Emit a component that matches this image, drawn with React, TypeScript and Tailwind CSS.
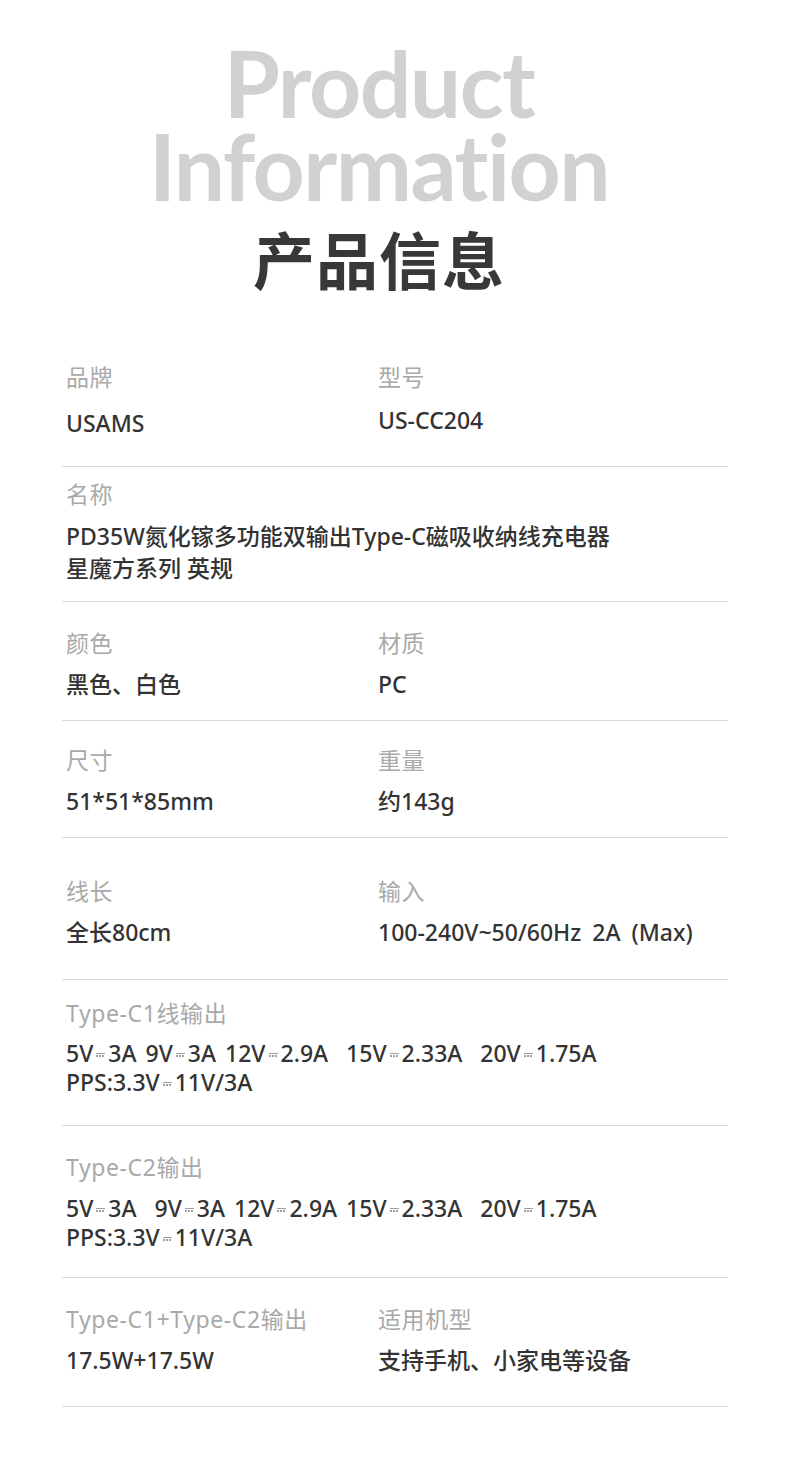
import React from "react";

const DC = () => (
  <span className="inline-flex flex-col justify-center gap-[1px] w-[9px] mx-[3px] align-middle relative -top-[1px]">
    <span className="block h-[1.5px] bg-[#a0a0a0]" />
    <span className="block h-[1.5px] w-full bg-[repeating-linear-gradient(90deg,#a0a0a0_0_2px,transparent_2px_3px)]" />
  </span>
);

const font = { fontFamily: '"Noto Sans", "Noto Sans CJK SC", sans-serif' };

const Label = ({ children }: { children: React.ReactNode }) => (
  <div className="text-[23px] leading-[30px] text-[#a9a9a9] font-normal tracking-[0.6px] whitespace-pre">{children}</div>
);

const Value = ({
  children,
  lh = "leading-[29px]",
  ws = "[word-spacing:5px]",
}: {
  children: React.ReactNode;
  lh?: string;
  ws?: string;
}) => (
  <div className={`text-[23px] ${lh} ${ws} text-[#333333] font-medium mt-[12px] whitespace-pre`}>{children}</div>
);

export default function App() {
  return (
    <div className="w-[790px] h-[1476px] bg-white" style={font}>
      <div className="flex flex-col items-center pr-[32px] pt-[41px]">
        <div
          className="text-[91px] leading-[83px] font-bold text-[#d0d1d3] tracking-[-1.5px] text-center"
          style={{ fontFamily: 'Lato, "Open Sans", sans-serif' }}
        >
          <div>Product</div>
          <div>Information</div>
        </div>
        <div
          className="text-[62px] leading-[80px] font-bold text-[#38383a] mt-[11px] tracking-[1px]"
          style={{ fontFamily: '"Noto Sans CJK SC", sans-serif' }}
        >
          产品信息
        </div>
      </div>

      <div className="mx-[62px] mt-[64px]">
        {/* row 1 */}
        <div className="grid grid-cols-[312px_1fr] pl-[4px] pb-[28px] border-b border-[#d9d9d9]">
          <div>
            <Label>品牌</Label>
            <div className="pt-[5px]"><Value>USAMS</Value></div>
          </div>
          <div>
            <Label>型号</Label>
            <div className="pt-[2px]"><Value>US-CC204</Value></div>
          </div>
        </div>
        {/* row 2 */}
        <div className="pl-[4px] pt-[12px] pb-[17px] border-b border-[#d9d9d9]">
          <Label>名称</Label>
          <div className="mt-[-1px]">
            <Value lh="leading-[32px]" ws="[word-spacing:0px]">
              {"PD35W氮化镓多功能双输出Type-C磁吸收纳线充电器\n星魔方系列 英规"}
            </Value>
          </div>
        </div>
        {/* row 3 */}
        <div className="grid grid-cols-[312px_1fr] pl-[4px] pt-[26px] pb-[21px] border-b border-[#d9d9d9]">
          <div>
            <Label>颜色</Label>
            <Value>黑色、白色</Value>
          </div>
          <div>
            <Label>材质</Label>
            <Value>PC</Value>
          </div>
        </div>
        {/* row 4 */}
        <div className="grid grid-cols-[312px_1fr] pl-[4px] pt-[24px] pb-[21px] border-b border-[#d9d9d9]">
          <div>
            <Label>尺寸</Label>
            <Value>51*51*85mm</Value>
          </div>
          <div>
            <Label>重量</Label>
            <Value>约143g</Value>
          </div>
        </div>
        {/* row 5 */}
        <div className="grid grid-cols-[312px_1fr] pl-[4px] pt-[38px] pb-[32px] border-b border-[#d9d9d9]">
          <div>
            <Label>线长</Label>
            <Value>全长80cm</Value>
          </div>
          <div>
            <Label>输入</Label>
            <Value>100-240V~50/60Hz 2A (Max)</Value>
          </div>
        </div>
        {/* row 6 */}
        <div className="pl-[4px] pt-[18px] pb-[28px] border-b border-[#d9d9d9]">
          <Label>Type-C1线输出</Label>
          <div className="mt-[-1px]">
            <Value ws="[word-spacing:3px]">
              5V<DC />3A 9V<DC />3A 12V<DC />2.9A  15V<DC />2.33A  20V<DC />1.75A{"\n"}PPS:3.3V<DC />11V/3A
            </Value>
          </div>
        </div>
        {/* row 7 */}
        <div className="pl-[4px] pt-[26px] pb-[25px] border-b border-[#d9d9d9]">
          <Label>Type-C2输出</Label>
          <div className="mt-[1px]">
            <Value ws="[word-spacing:3px]">
              5V<DC />3A  9V<DC />3A 12V<DC />2.9A 15V<DC />2.33A  20V<DC />1.75A{"\n"}PPS:3.3V<DC />11V/3A
            </Value>
          </div>
        </div>
        {/* row 8 */}
        <div className="grid grid-cols-[312px_1fr] pl-[4px] pt-[26px] pb-[31px] border-b border-[#d9d9d9]">
          <div>
            <Label>Type-C1+Type-C2输出</Label>
            <div className="mt-[1px]"><Value>17.5W+17.5W</Value></div>
          </div>
          <div>
            <Label>适用机型</Label>
            <div className="mt-[1px]"><Value>支持手机、小家电等设备</Value></div>
          </div>
        </div>
      </div>
    </div>
  );
}
